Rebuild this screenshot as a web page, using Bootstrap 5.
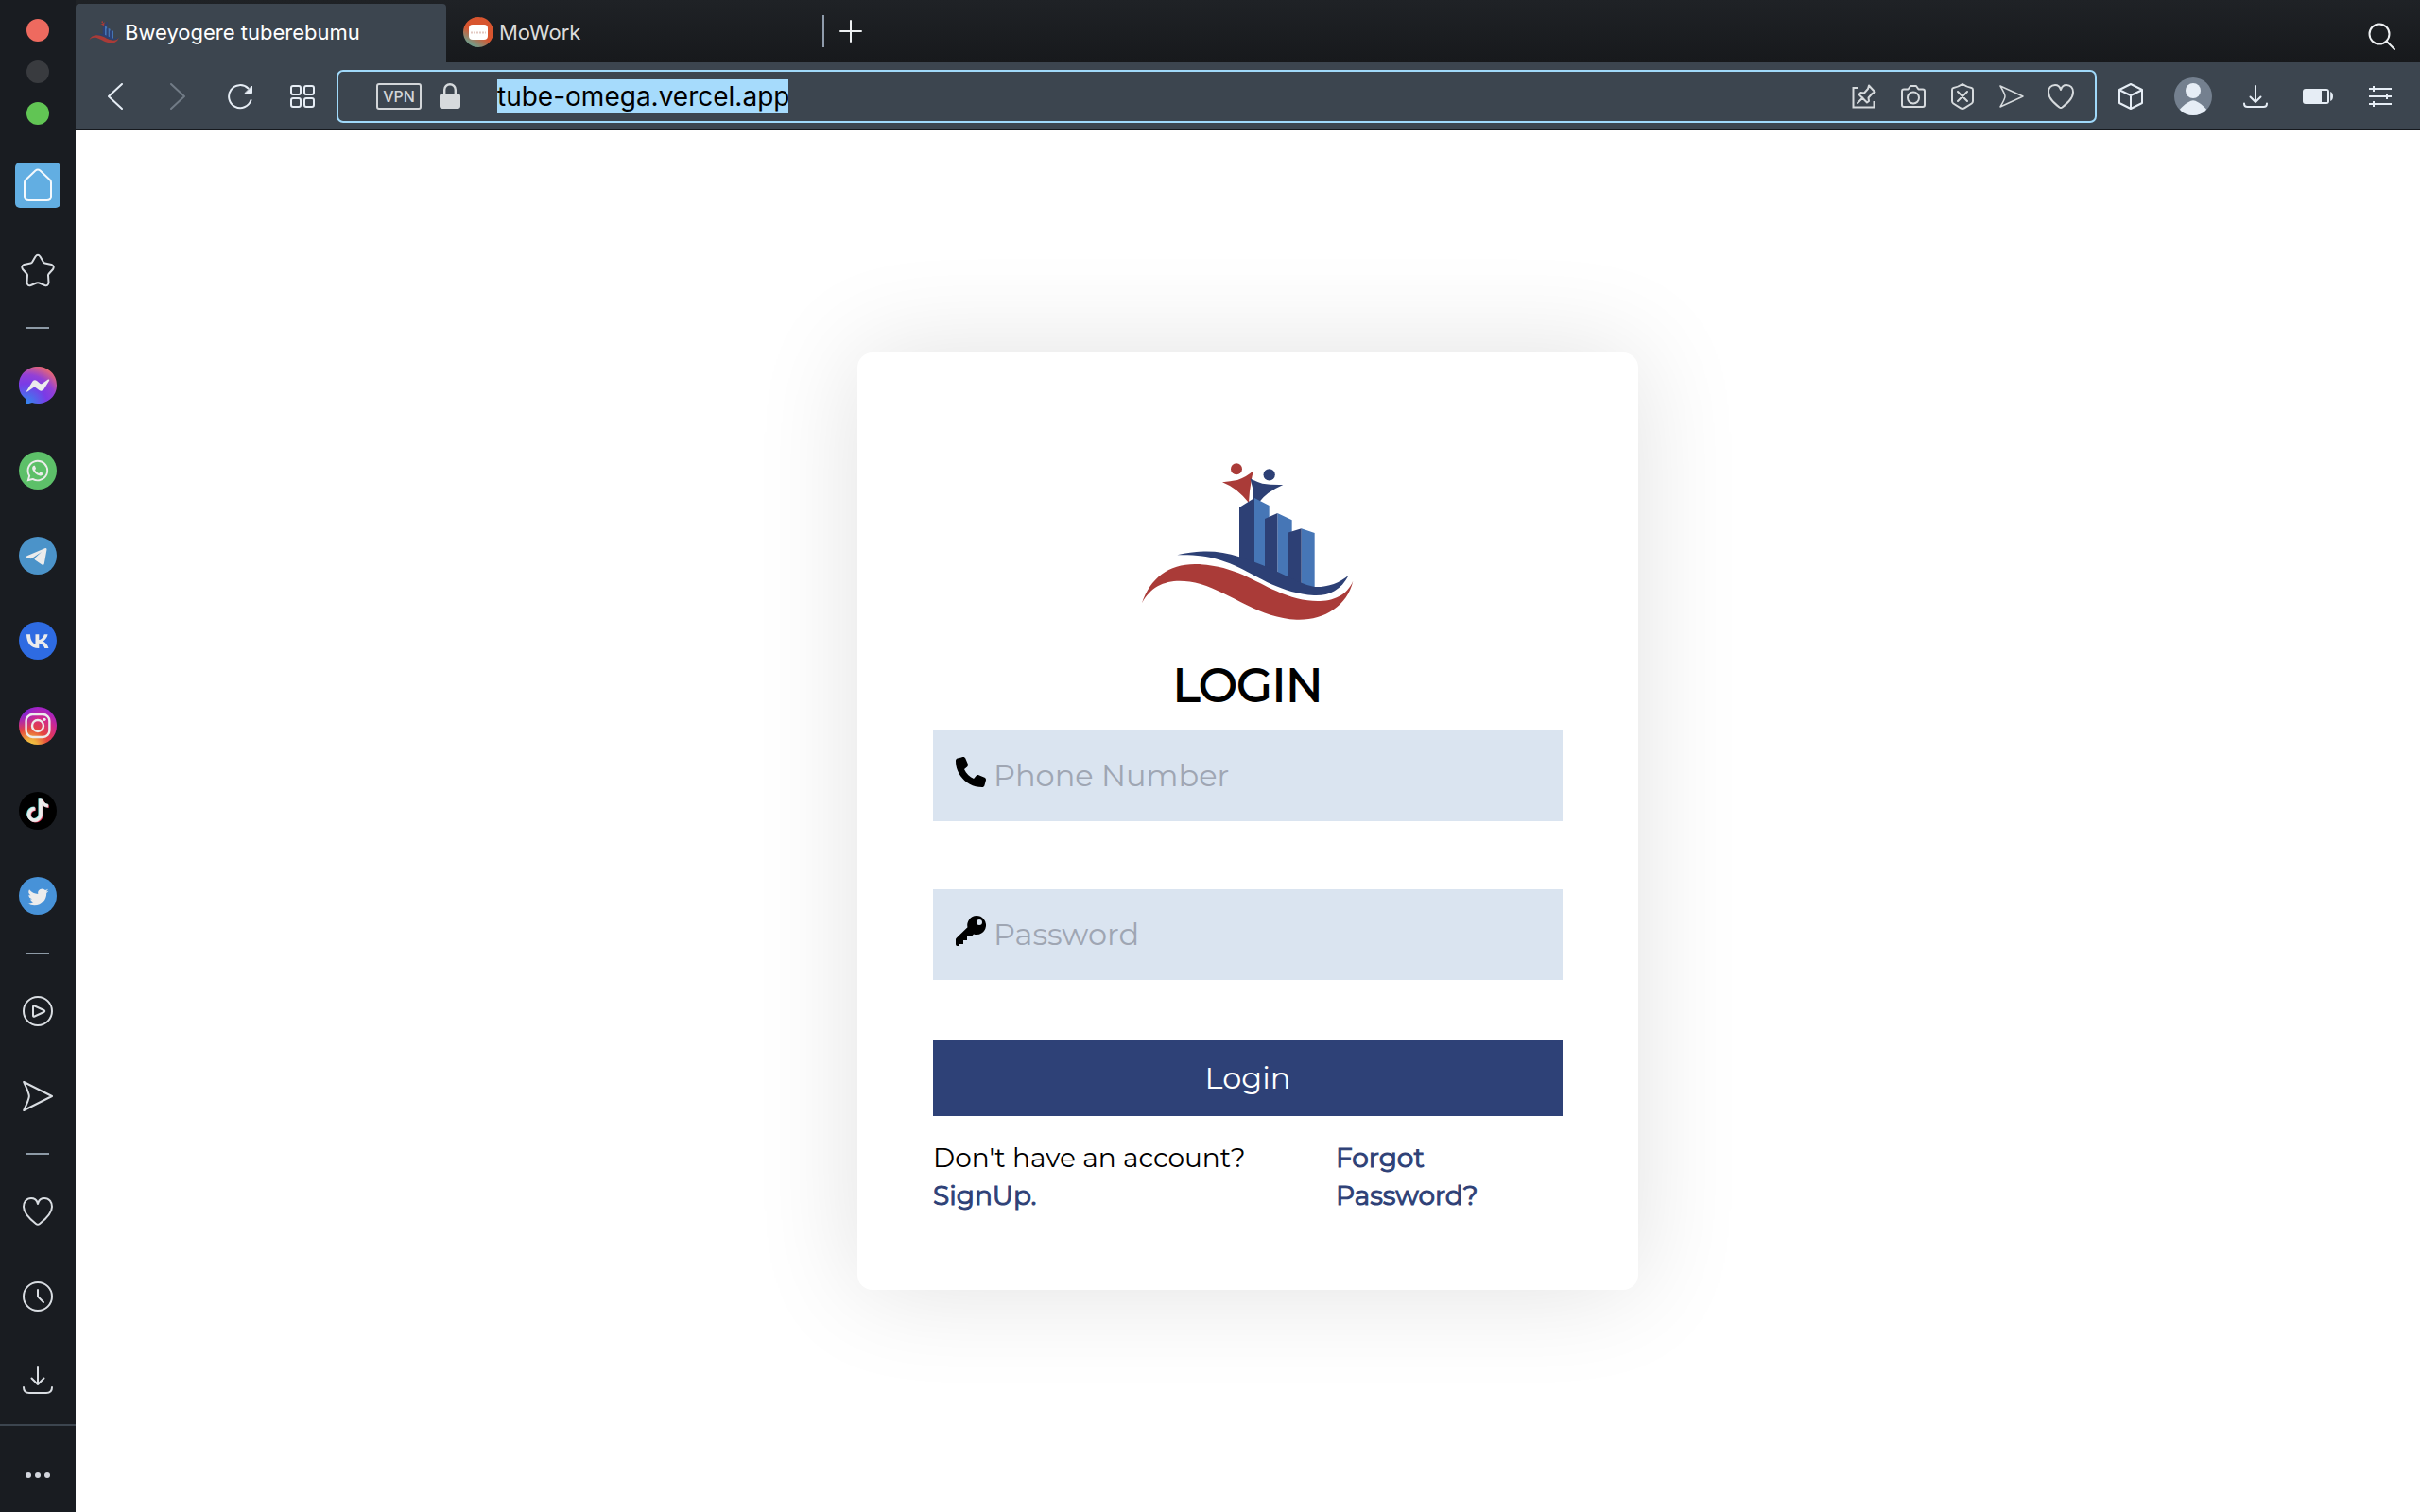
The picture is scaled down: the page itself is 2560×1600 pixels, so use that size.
<!DOCTYPE html>
<html lang="en">
<head>
<meta charset="utf-8">
<meta name="viewport" content="width=device-width, initial-scale=1">
<title>Bweyogere tuberebumu</title>
<link href="https://cdn.jsdelivr.net/npm/bootstrap@5.3.0/dist/css/bootstrap.min.css" rel="stylesheet">
<script src="https://cdn.jsdelivr.net/npm/bootstrap@5.3.0/dist/js/bootstrap.bundle.min.js" defer></script>
<style>
  body { font-family: Inter, "Liberation Sans", sans-serif; background: #fff; color: #000; }
  svg { display: block; flex: none; }
  .ln { fill: none; stroke: currentColor; stroke-width: 2; stroke-linecap: round; stroke-linejoin: round; }
  button { font: inherit; }

  /* left rail */
  .rail { width: 80px; background: #191c21; color: #d9dde2; }
  .lights { gap: 20px; padding: 20px 0 19px; }
  .light { width: 24px; height: 24px; }
  .light-close { background: #ee6a5f; }
  .light-min { background: #393b3f; }
  .light-zoom { background: #61c554; }
  .rail-item { height: 90px; color: inherit; }
  .home-tile { width: 48px; height: 48px; border-radius: 5px; background: #62aee2; color: #f4f9fd; }
  .rail-gap { height: 32px; }
  .rail-gap span { width: 24px; height: 2px; background: #8d9aa6; }
  .rail-foot { height: 93px; padding-top: 12px; border-top: 2px solid #3c454f; }

  /* tabs */
  .tabs { height: 66px; padding-top: 4px; background: linear-gradient(#1f2226, #17191c); }
  .tab-link { width: 392px; padding: 0 14px 2px; gap: 6px; font-size: 22px; color: #dcdcdc; }
  .tab-on { background: #3c454f; color: #fff; border-radius: 4px 4px 0 0; }
  .tab-icon { width: 32px; }
  .tab-end { padding: 0 0 4px 2px; }
  .tab-rule { width: 2px; height: 34px; background: #8f9bab; }
  .plain { background: none; border: 0; padding: 0; color: #eef0f2; }
  .new-tab { width: 56px; }
  .find { width: 80px; }

  /* toolbar */
  .tools { height: 72px; padding: 0 9px; background: #3c454f; color: #e6edf5; border-bottom: 1px solid #16191e; }
  .tool { width: 66px; height: 60px; color: inherit; }
  .tool-off { color: #717b86; }
  .address { height: 56px; margin: 0 3px; padding: 0 10px 0 40px; border: 2px solid #a0d9fa; border-radius: 7px; color: #d6dadd; }
  .vpn { width: 48px; height: 28px; border: 2px solid #d3d6d9; border-radius: 3px; font-size: 16px; line-height: 24px; font-weight: 500; color: #d3d6d9; }
  .lock { margin: 0 39px 0 19px; }
  .url { width: 308px; height: 36px; padding: 0; border: 0; background: #a6dbfc; color: #000; font-size: 28px; line-height: 36px; border-radius: 0; }
  .addr-btn { width: 52px; height: 48px; color: inherit; }

  /* login card */
  .login-card { width: 826px; padding: 80px; border: 0; border-radius: 16px; box-shadow: 0 0 112px rgba(0,0,0,.12); font-family: Montserrat, Inter, sans-serif; }
  .login-title { font-size: 48px; line-height: 64px; font-weight: 400; -webkit-text-stroke: 2px currentColor; margin-bottom: 16px; }
  .field { height: 96px; padding: 0 24px; gap: 8px; background: #dae4f0; }
  .field label { padding-bottom: 8px; }
  .field input { border: 0; background: none; padding: 0; outline: 0; font-size: 32px; color: #000; }
  .field input::placeholder { color: #9fa6b3; opacity: 1; }
  .field-1 { margin-bottom: 72px; }
  .field-2 { margin-bottom: 64px; }
  .btn-login { height: 80px; border-radius: 0; background: #2e4177; border: 0; color: #fff; font-size: 32px; margin-bottom: 24px; padding: 0; }
  .btn-login:hover { background: #263768; color: #fff; }
  .foot { font-size: 28px; line-height: 40px; }
  .foot a { color: #2e4177; -webkit-text-stroke: 1px currentColor; text-decoration: none; }
  .foot-forgot { width: 240px; padding-right: 60px; }
</style>
</head>
<body>
<div class="d-flex min-vh-100">

  <nav class="rail d-flex flex-column flex-shrink-0" aria-label="Sidebar">
    <div class="lights d-flex flex-column align-items-center">
      <span class="light light-close rounded-circle"></span>
      <span class="light light-min rounded-circle"></span>
      <span class="light light-zoom rounded-circle"></span>
    </div>
    <a href="#" class="rail-item d-flex align-items-center justify-content-center" aria-label="Home">
      <span class="home-tile d-flex align-items-center justify-content-center">
        <svg class="ln" width="32" height="36" viewBox="0 0 32 36"><path d="M13.500 2.500Q16 .5 18.500 2.500L29 12.500Q30 13.500 30 15V29.500Q30 34 25.500 34H6.500Q2 34 2 29.500V15Q2 13.500 3 12.500Z"/></svg>
      </span>
    </a>
    <a href="#" class="rail-item d-flex align-items-center justify-content-center" aria-label="Bookmarks">
      <svg class="ln" width="36" height="36" viewBox="0 0 36 36"><path d="M15.500 3.500Q18 0 20.500 3.500L24 9.500Q24.500 10.300 25.500 10.500L32.500 12Q36 13.500 34 17L29.500 22Q29 22.500 29 23.500L29.500 31Q29 35 25.500 34L19.500 31.500Q18 31 16.500 31.500L10.500 34Q7 35 6.500 31L7 23.500Q7 22.500 6.500 22L2 17Q0 13.500 3.500 12L10.500 10.500Q11.500 10.300 12 9.500Z"/></svg>
    </a>
    <div class="rail-gap d-flex align-items-center justify-content-center"><span></span></div>
    <a href="#" class="rail-item d-flex align-items-center justify-content-center" aria-label="Messenger">
      <svg width="40" height="40" viewBox="0 0 40 40"><defs><radialGradient id="gm" cx=".2" cy="1" r="1.1"><stop offset="0" stop-color="#2e8df0"/><stop offset=".5" stop-color="#7a3be6"/><stop offset=".72" stop-color="#9340d6"/><stop offset="1" stop-color="#ee6a6c"/></radialGradient></defs><path fill="url(#gm)" d="M20 0C31 0 40 8 40 19.500S31 39 20 39c-2.200 0-4.200-.3-6-.9L7 40v-6C2.500 30.500 0 25.500 0 19.500 0 8 9 0 20 0Z"/><path fill="#ececec" d="M8 26 14.500 15.500Q16.500 13.500 19 15L22.500 18Q23.500 18.500 24.500 18L31 13.500Q33 13 32 15L26 24.500Q24 26.500 21.500 25L17.500 22Q16.500 21.500 15.500 22L9 26.500Q8 27 8 26Z"/></svg>
    </a>
    <a href="#" class="rail-item d-flex align-items-center justify-content-center" aria-label="WhatsApp">
      <svg width="40" height="40" viewBox="0 0 40 40"><circle cx="20" cy="20" r="20" fill="#5dc069"/><g transform="translate(8.500 8.800) scale(1.420)"><path fill="#ececec" d="M13.601 2.326A7.854 7.854 0 0 0 7.994 0C3.627 0 .068 3.558.064 7.926c0 1.399.366 2.760 1.057 3.965L0 16l4.204-1.102a7.933 7.933 0 0 0 3.790.965h.004c4.368 0 7.926-3.558 7.930-7.930A7.898 7.898 0 0 0 13.600 2.326zM7.994 14.521a6.573 6.573 0 0 1-3.356-.92l-.24-.144-2.494.654.666-2.433-.156-.251a6.560 6.560 0 0 1-1.007-3.505c0-3.626 2.957-6.584 6.591-6.584a6.560 6.560 0 0 1 4.660 1.931 6.557 6.557 0 0 1 1.928 4.660c-.004 3.639-2.961 6.592-6.592 6.592zm3.615-4.934c-.197-.099-1.170-.578-1.353-.646-.182-.065-.315-.099-.445.099-.133.197-.513.646-.627.775-.114.133-.232.148-.43.05-.197-.1-.836-.308-1.592-.985-.59-.525-.985-1.175-1.103-1.372-.114-.198-.011-.304.088-.403.087-.088.197-.232.296-.346.1-.114.133-.198.198-.33.065-.134.034-.248-.015-.347-.05-.099-.445-1.076-.612-1.470-.16-.389-.323-.335-.445-.34-.114-.007-.247-.007-.38-.007a.729.729 0 0 0-.529.247c-.182.198-.691.677-.691 1.654 0 .977.71 1.916.81 2.049.098.133 1.394 2.132 3.383 2.992.47.205.84.326 1.129.418.475.152.904.129 1.246.08.38-.058 1.171-.48 1.338-.943.164-.464.164-.86.114-.943-.049-.084-.182-.133-.38-.232z"/></g></svg>
    </a>
    <a href="#" class="rail-item d-flex align-items-center justify-content-center" aria-label="Telegram">
      <svg width="40" height="40" viewBox="0 0 40 40"><circle cx="20" cy="20" r="20" fill="#4b93c9"/><path fill="#ececec" d="M8.500 20.300 28 12Q29.700 11.600 29.500 13.500L26.800 28.500Q26.300 30.600 24.300 29.500L17 24.500Q16 23.500 17 22.500L24 16 14 22.800Q13 23.400 12 23.100L8.300 22Q7 21.200 8.500 20.300Z"/></svg>
    </a>
    <a href="#" class="rail-item d-flex align-items-center justify-content-center" aria-label="VK">
      <svg width="40" height="40" viewBox="0 0 40 40"><circle cx="20" cy="20" r="20" fill="#2e6be2"/><path fill="#ececec" d="M20.800 28C12.800 28 8.200 22.500 8 13.200h4c.1 6.800 3.100 9.700 5.500 10.300V13.200h3.800v5.900c2.300-.3 4.700-2.900 5.500-5.900h3.800c-.6 3.600-3.200 6.200-5.100 7.300 1.900.9 4.900 3.200 6 7.500h-4.200c-.9-2.800-3.100-5-6-5.300V28Z"/></svg>
    </a>
    <a href="#" class="rail-item d-flex align-items-center justify-content-center" aria-label="Instagram">
      <svg width="40" height="40" viewBox="0 0 40 40"><defs><radialGradient id="gi" cx=".3" cy="1.050" r="1.050"><stop offset="0" stop-color="#f2cf45"/><stop offset=".18" stop-color="#f0b03e"/><stop offset=".45" stop-color="#e5453e"/><stop offset=".75" stop-color="#d42a86"/><stop offset="1" stop-color="#a623c4"/></radialGradient><radialGradient id="gi2" cx="0" cy=".05" r=".6"><stop offset="0" stop-color="#4a24f0"/><stop offset="1" stop-color="#a020e0" stop-opacity="0"/></radialGradient></defs><circle cx="20" cy="20" r="20" fill="url(#gi)"/><circle cx="20" cy="20" r="20" fill="url(#gi2)"/><g fill="none" stroke="#ececec" stroke-width="2.400"><rect x="7.600" y="8" width="24.800" height="24" rx="7"/><circle cx="20" cy="20" r="6"/></g><circle cx="27" cy="13.300" r="1.600" fill="#ececec"/></svg>
    </a>
    <a href="#" class="rail-item d-flex align-items-center justify-content-center" aria-label="TikTok">
      <svg width="40" height="40" viewBox="0 0 40 40"><circle cx="20" cy="20" r="20" fill="#000"/><g transform="translate(6.500 6.200) scale(1.550)"><path fill="#66dfdc" d="M9 0h1.980c.144.715.54 1.617 1.235 2.512C12.895 3.389 13.797 4 15 4v2c-1.753 0-3.070-.814-4-1.829V11a5 5 0 1 1-5-5v2a3 3 0 1 0 3 3V0Z"/></g><g transform="translate(8.500 7.600) scale(1.550)"><path fill="#e5375a" d="M9 0h1.980c.144.715.54 1.617 1.235 2.512C12.895 3.389 13.797 4 15 4v2c-1.753 0-3.070-.814-4-1.829V11a5 5 0 1 1-5-5v2a3 3 0 1 0 3 3V0Z"/></g><g transform="translate(7.500 6.900) scale(1.550)"><path fill="#ececec" stroke="#ececec" stroke-width=".5" d="M9 0h1.980c.144.715.54 1.617 1.235 2.512C12.895 3.389 13.797 4 15 4v2c-1.753 0-3.070-.814-4-1.829V11a5 5 0 1 1-5-5v2a3 3 0 1 0 3 3V0Z"/></g></svg>
    </a>
    <a href="#" class="rail-item d-flex align-items-center justify-content-center" aria-label="Twitter">
      <svg width="40" height="40" viewBox="0 0 40 40"><circle cx="20" cy="20" r="20" fill="#4792d8"/><g transform="translate(9.500 9.800) scale(1.370)"><path fill="#ececec" d="M5.026 15c6.038 0 9.341-5.003 9.341-9.334 0-.14 0-.282-.006-.422A6.685 6.685 0 0 0 16 3.542a6.658 6.658 0 0 1-1.889.518 3.301 3.301 0 0 0 1.447-1.817 6.533 6.533 0 0 1-2.087.793A3.286 3.286 0 0 0 7.875 6.030a9.325 9.325 0 0 1-6.767-3.429 3.289 3.289 0 0 0 1.018 4.382A3.323 3.323 0 0 1 .64 6.575v.045a3.288 3.288 0 0 0 2.632 3.218 3.203 3.203 0 0 1-.865.115 3.230 3.230 0 0 1-.614-.057 3.283 3.283 0 0 0 3.067 2.277A6.588 6.588 0 0 1 .78 13.580a6.320 6.320 0 0 1-.78-.045A9.344 9.344 0 0 0 5.026 15z"/></g></svg>
    </a>
    <div class="rail-gap d-flex align-items-center justify-content-center"><span></span></div>
    <a href="#" class="rail-item d-flex align-items-center justify-content-center" aria-label="Player">
      <svg class="ln" width="32" height="32" viewBox="0 0 32 32"><circle cx="16" cy="16" r="15"/><path d="M11 11.500Q11 9.800 12.600 10.500L22.500 15Q24 16 22.500 17L12.600 21.500Q11 22.200 11 20.500Z"/></svg>
    </a>
    <a href="#" class="rail-item d-flex align-items-center justify-content-center" aria-label="Flow">
      <svg class="ln" width="32" height="32" viewBox="0 0 32 32"><path d="M1.200 1 31 16 1.200 31Q7 18.500 6.800 16 7 13.500 1.200 1Z"/></svg>
    </a>
    <div class="rail-gap d-flex align-items-center justify-content-center"><span></span></div>
    <a href="#" class="rail-item d-flex align-items-center justify-content-center" aria-label="Favourites">
      <svg class="ln" width="32" height="30" viewBox="0 0 32 30"><path d="M16 7C15 2.500 12 1 9 1 4 1 1 5 1 10c0 7 6 12.500 13 18q2 1.600 4 0C25 22.500 31 17 31 10c0-5-3-9-8-9-3 0-6 1.500-7 6Z"/></svg>
    </a>
    <a href="#" class="rail-item d-flex align-items-center justify-content-center" aria-label="History">
      <svg class="ln" width="32" height="32" viewBox="0 0 32 32"><circle cx="16" cy="16" r="15"/><path d="M16 9v7l6 6"/></svg>
    </a>
    <a href="#" class="rail-item d-flex align-items-center justify-content-center" aria-label="Downloads">
      <svg class="ln" width="32" height="32" viewBox="0 0 32 32"><path d="M16 1v18M9.500 12.500 16 19l6.500-6.500M1 22q0 6 6 6h18q6 0 6-6"/></svg>
    </a>
    <div class="rail-foot mt-auto d-flex align-items-center justify-content-center">
      <button type="button" class="plain" aria-label="Customise sidebar"><svg width="26" height="6" viewBox="0 0 26 6" fill="#d3d6dd"><circle cx="3" cy="3" r="3"/><circle cx="13" cy="3" r="3"/><circle cx="23" cy="3" r="3"/></svg></button>
    </div>
  </nav>

  <div class="d-flex flex-column flex-grow-1">
    <div class="tabs d-flex">
      <a href="#" class="tab-link tab-on d-flex align-items-center text-decoration-none">
        <svg class="tab-icon" width="32" height="24" viewBox="50 60 680 500"><use href="#logo-art"/></svg>
        Bweyogere tuberebumu
      </a>
      <a href="#" class="tab-link ms-1 d-flex align-items-center text-decoration-none">
        <svg width="32" height="32" viewBox="0 0 32 32"><defs><linearGradient id="gw" x1=".2" y1="1" x2=".6" y2=".3"><stop offset="0" stop-color="#5fa795"/><stop offset=".2" stop-color="#7d9580"/><stop offset=".65" stop-color="#d8552f"/></linearGradient></defs><circle cx="16" cy="16" r="16" fill="url(#gw)"/><rect x="6" y="8" width="20" height="16" rx="4" fill="#fff"/><path d="M8 16.500h16" stroke="#e3c9c2" stroke-width="2" stroke-dasharray="2 1"/></svg>
        MoWork
      </a>
      <div class="tab-end d-flex align-items-center">
        <span class="tab-rule"></span>
        <button type="button" class="plain new-tab d-flex justify-content-center" aria-label="New tab"><svg class="ln" width="24" height="24" viewBox="0 0 24 24"><path d="M12 1v22M1 12h22"/></svg></button>
      </div>
      <button type="button" class="plain find ms-auto pt-2 d-flex align-items-center justify-content-center" aria-label="Search tabs"><svg class="ln" width="30" height="30" viewBox="0 0 30 30"><circle cx="12" cy="12" r="10.500"/><path d="m19.500 19.500 8.500 8.500"/></svg></button>
    </div>

    <div class="tools d-flex align-items-center">
      <button type="button" class="plain tool d-flex align-items-center justify-content-center" aria-label="Back"><svg class="ln" width="16" height="28" viewBox="0 0 16 28"><path d="M15 1 1 14l14 13"/></svg></button>
      <button type="button" class="plain tool tool-off d-flex align-items-center justify-content-center" aria-label="Forward"><svg class="ln" width="16" height="28" viewBox="0 0 16 28"><path d="m1 1 14 13L1 27"/></svg></button>
      <button type="button" class="plain tool d-flex align-items-center justify-content-center" aria-label="Reload"><svg class="ln" width="28" height="28" viewBox="0 0 28 28"><path d="M25.500 18A12 12 0 1 1 22.500 5.500"/><path d="M26.500 3.500v7h-7Z" fill="currentColor" stroke-width="1"/></svg></button>
      <button type="button" class="plain tool d-flex align-items-center justify-content-center" aria-label="Speed dial"><svg class="ln" width="26" height="24" viewBox="0 0 26 24"><rect x="1" y="1" width="10" height="9" rx="2"/><rect x="15" y="1" width="10" height="9" rx="2"/><rect x="1" y="14" width="10" height="9" rx="2"/><rect x="15" y="14" width="10" height="9" rx="2"/></svg></button>

      <div class="address d-flex align-items-center flex-grow-1">
        <button type="button" class="plain vpn text-center">VPN</button>
        <svg class="lock" width="22" height="28" viewBox="0 0 22 28"><path d="M5.200 13V7a5.800 5.800 0 0 1 11.600 0v6" fill="none" stroke="#d6dadd" stroke-width="2.400"/><rect y="11" width="22" height="16" rx="3" fill="#d6dadd"/></svg>
        <input class="url" type="text" value="tube-omega.vercel.app" aria-label="Address">
        <div class="ms-auto d-flex">
          <button type="button" class="plain addr-btn d-flex align-items-center justify-content-center" aria-label="Pin page"><svg class="ln" width="26" height="26" viewBox="0 0 26 26"><path stroke-linecap="butt" stroke-linejoin="miter" d="M7 4H1.500v20.500h22V18"/><path d="m18 1.500 6.500 7-3 1.500-4 4.500.5 3.500-2 1.500-8.500-8.500 2-2 3.500.5 4-4.500ZM11.500 14.500 6 20"/></svg></button>
          <button type="button" class="plain addr-btn d-flex align-items-center justify-content-center" aria-label="Snapshot"><svg class="ln" width="26" height="24" viewBox="0 0 26 24"><path d="M3 4.500h4.500L10 1h6l2.500 3.500H23q2 0 2 2V21q0 2-2 2H3q-2 0-2-2V6.500q0-2 2-2Z"/><circle cx="13" cy="13.500" r="6"/></svg></button>
          <button type="button" class="plain addr-btn d-flex align-items-center justify-content-center" aria-label="Ad blocker"><svg class="ln" width="24" height="28" viewBox="0 0 24 28"><path d="M12 1c2.500 1.700 5.500 3.300 9.500 4q1.500.3 1.500 2v12q0 1.500-1.300 2.500L14 26.300q-2 1.200-4 0L2.300 21.500Q1 20.500 1 19V7q0-1.700 1.500-2C6.500 4.300 9.500 2.700 12 1ZM7 9l10 10M17 9 7 19"/></svg></button>
          <button type="button" class="plain addr-btn d-flex align-items-center justify-content-center" aria-label="Send to Flow"><svg class="ln" width="26" height="24" viewBox="0 0 26 24"><path stroke-width="1.500" d="M1 1l24 11L1 23q5-8.500 5-11T1 1Z"/></svg></button>
          <button type="button" class="plain addr-btn d-flex align-items-center justify-content-center" aria-label="Add bookmark"><svg class="ln" width="28" height="26" viewBox="0 0 28 26"><path d="M14 6C13 2.500 10.500 1 8 1 3.500 1 1 4.500 1 8.500 1 15 7 20 12.500 24.500q1.500 1 3 0C21 20 27 15 27 8.500 27 4.500 24.500 1 20 1c-2.500 0-5 1.500-6 5Z"/></svg></button>
        </div>
      </div>

      <button type="button" class="plain tool d-flex align-items-center justify-content-center" aria-label="Extensions"><svg class="ln" width="26" height="28" viewBox="0 0 26 28"><path d="M13 1l12 6v14l-12 6L1 21V7ZM1.500 7.500 13 13l11.500-5.500M13 13v14"/></svg></button>
      <button type="button" class="plain tool d-flex align-items-center justify-content-center" aria-label="Profile"><svg width="40" height="40" viewBox="0 0 40 40"><clipPath id="av"><circle cx="20" cy="20" r="20"/></clipPath><g clip-path="url(#av)"><path fill="#74808f" d="M0 0h40v40H0z"/><circle cx="20" cy="14" r="8" fill="#e6edf5"/><path fill="#e6edf5" d="M6 33.500q6-6.500 11.500-8.800 2.500-1 5 0Q28 27 34 33.500L30 40H10Z"/></g></svg></button>
      <button type="button" class="plain tool d-flex align-items-center justify-content-center" aria-label="Downloads list"><svg class="ln" width="26" height="24" viewBox="0 0 26 24"><path d="M13 1v17M7.500 12.500 13 18l5.500-5.500M1 19.500Q1 23 4.500 23h17q3.500 0 3.500-3.500"/></svg></button>
      <button type="button" class="plain tool d-flex align-items-center justify-content-center" aria-label="Battery"><svg width="32" height="16" viewBox="0 0 32 16" fill="#e6edf5"><rect width="28" height="16" rx="3"/><rect x="20" y="2" width="6" height="12" fill="#3c454f"/><path d="M29.200 3Q32 4 32 8t-2.800 5Z"/></svg></button>
      <button type="button" class="plain tool d-flex align-items-center justify-content-center" aria-label="Easy setup"><svg class="ln" width="24" height="24" viewBox="0 0 24 24"><path stroke-linecap="butt" d="M0 4h24M0 12h24M0 20h24M5 1v6M19 9v6M5 17v6"/></svg></button>
    </div>

    <main class="flex-grow-1 d-flex align-items-center justify-content-center">
      <form class="card login-card">
        <svg class="mx-auto" width="260" height="240" viewBox="0 -51 780 720" role="img" aria-label="Bweyogere tuberebumu logo">
          <g id="logo-art">
            <circle cx="354" cy="79" r="18" fill="#aa3b38"/>
            <circle cx="458" cy="97" r="18.500" fill="#2d4075"/>
            <path fill="#aa3b38" d="M309 121Q335 118 357 114 388 103 408 84 396 130 393 186 375 163 354 146 332 130 309 121Z"/>
            <path fill="#2d4075" d="M397 109Q415 118 436 125 465 130 502 129 475 141 455 155 440 166 427 183L407 174Q409 140 397 109Z"/>
            <path fill="#4676b6" d="M411 171 458 195V400H411ZM484 219 530 241V430H484ZM560 268 602 282V460H560Z"/>
            <path fill="#2d4075" d="M363 201 411 171V380L363 365ZM444 237 484 219V410L444 390ZM516 281 560 268V445L516 425Z"/>
            <path fill="#2d4075" d="M166 352C240 335 300 337 363 358L411 374 444 387 484 405 516 420 560 440Q580 449 602 453C645 454 680 441 710 416 685 465 645 482 600 480 500 474 420 420 365 393 300 363 250 350 166 352Z"/>
            <path fill="#aa3b38" d="M54 505C80 425 140 380 225 381 340 383 410 435 480 466 580 512 690 515 724 434 705 515 630 560 545 557 430 553 340 475 240 444 160 422 90 435 54 505Z"/>
          </g>
        </svg>
        <h1 class="login-title text-center">LOGIN</h1>
        <div class="field field-1 d-flex align-items-center">
          <label for="phone" aria-label="Phone number"><svg width="32" height="32" viewBox="0 0 512 512"><path d="M164.900 24.600c-7.700-18.600-28-28.500-47.400-23.200l-88 24C12.100 30.200 0 46 0 64C0 311.400 200.600 512 448 512c18 0 33.800-12.100 38.600-29.500l24-88c5.300-19.400-4.600-39.700-23.200-47.400l-96-40c-16.300-6.800-35.200-2.100-46.300 11.600L304.700 368C234.300 334.700 177.300 277.700 144 207.300L193.300 167c13.700-11.200 18.400-30 11.600-46.300l-40-96z"/></svg></label>
          <input class="flex-grow-1" id="phone" type="tel" placeholder="Phone Number">
        </div>
        <div class="field field-2 d-flex align-items-center">
          <label for="pass" aria-label="Password"><svg width="32" height="32" viewBox="0 0 96 96"><path fill-rule="evenodd" d="M66 0a30 30 0 1 1-9 58.600L50 66H36V78H24V90H12V96H5Q0 96 0 91V75Q0 73 2 71L37.500 37A30 30 0 0 1 66 0Zm9 12a9 9 0 1 0 0 18 9 9 0 0 0 0-18Z"/></svg></label>
          <input class="flex-grow-1" id="pass" type="password" placeholder="Password">
        </div>
        <button type="submit" class="btn btn-login w-100">Login</button>
        <div class="foot d-flex justify-content-between">
          <div>Don't have an account?<br><a href="#">SignUp.</a></div>
          <div class="foot-forgot"><a href="#">Forgot Password?</a></div>
        </div>
      </form>
    </main>
  </div>
</div>
</body>
</html>
